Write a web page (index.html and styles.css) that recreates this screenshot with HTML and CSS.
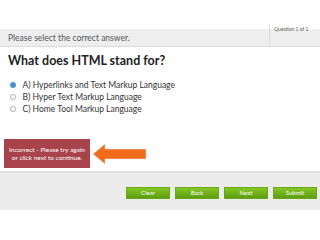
FILE: index.html
```html
<!DOCTYPE html>
<html lang="en">
<head>
  <meta charset="UTF-8" />
  <title>Quiz</title>
  <link rel="stylesheet" href="styles.css">
</head>
<body>
  <div id="prompt">
    <div class="prompt-text">Please select the correct answer.</div>
    <div class="counter">Question 1 of 1</div>
  </div>

  <h1 id="question">What does HTML stand for?</h1>

  <ul id="answers">
    <li class="selected"><span class="radio"></span>A) Hyperlinks and Text Markup Language</li>
    <li><span class="radio"></span>B) Hyper Text Markup Language</li>
    <li><span class="radio"></span>C) Home Tool Markup Language</li>
  </ul>

  <div id="feedback">
    <div class="msg">Incorrect - Please try again<br>or click next to continue.</div>
    <svg class="arrow" width="56" height="22" viewBox="0 0 56 22">
      <polygon points="1,11 13,1 13,6 54,6 54,16 13,16 13,21" fill="#f26b1a" stroke="#e0dcd8" stroke-width="0.6"/>
    </svg>
  </div>

  <div id="footer">
    <button class="btn">Clear</button>
    <button class="btn">Back</button>
    <button class="btn">Next</button>
    <button class="btn">Submit</button>
  </div>
</body>
</html>
```
FILE: styles.css
```css
body {
  margin: 0;
  background: #fff;
  font-family: Lato, "Open Sans", sans-serif;
  color: #333;
  width: 320px;
  height: 240px;
  overflow: hidden;
}
#prompt {
  display: flex;
  margin-top: 29px;
  height: 17px;
  background: #eeeeee;
  border-bottom: 1px solid #dcdcdc;
}
.prompt-text {
  flex: 1;
  padding: 4px 0 0 8px;
  font-size: 8.5px;
  color: #555;
}
.counter {
  width: 46px;
  padding: 2px 0 0 4px;
  margin-top: -5px;
  border-left: 1px solid #dcdcdc;
  font-size: 5px;
  color: #666;
}
#question {
  margin: 6px 0 0 8px;
  font-size: 12.5px;
  font-weight: bold;
  color: #222;
}
#answers {
  list-style: none;
  margin: 11px 0 0 0;
  padding: 0 0 0 10px;
}
#answers li {
  display: flex;
  align-items: center;
  height: 12px;
  font-size: 8.5px;
  color: #333;
}
.radio {
  width: 3.5px;
  height: 3.5px;
  margin-right: 7px;
  border-radius: 50%;
  border: 0.6px solid #aaa;
  background: #fff;
}
.selected .radio {
  background: #4a8fd0;
  border-color: #4a8fd0;
}
#feedback {
  display: flex;
  align-items: center;
  gap: 2px;
  margin: 24px 0 0 4px;
}
.msg {
  width: 86px;
  height: 29px;
  box-sizing: border-box;
  padding-top: 7px;
  background: #a8434b;
  color: #fff;
  font-size: 6.5px;
  line-height: 7.5px;
  text-align: center;
}
#footer {
  display: flex;
  justify-content: flex-end;
  align-items: center;
  gap: 5px;
  margin-top: 3px;
  height: 39px;
  padding: 2px 3px 0 0;
  box-sizing: border-box;
  background: #ececec;
  border-top: 2px solid #e0e0e0;
}
.btn {
  width: 44px;
  height: 12px;
  padding: 0;
  border: 1px solid #6aa51a;
  background: linear-gradient(#86c924, #5c9c10);
  color: #fff;
  font-family: Lato, "Open Sans", sans-serif;
  font-size: 6px;
}
```
